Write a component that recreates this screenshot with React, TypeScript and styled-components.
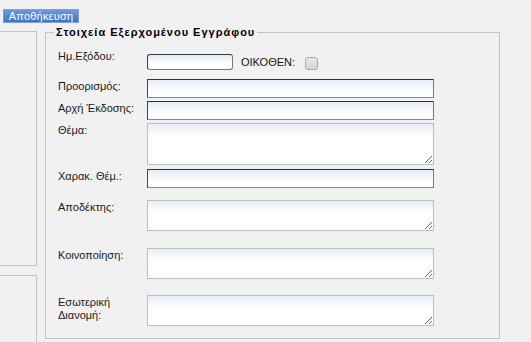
import React from 'react';
import styled, { createGlobalStyle } from 'styled-components';

const GlobalStyle = createGlobalStyle`
  html, body {
    margin: 0;
    padding: 0;
    background: #f1f1f1;
    font-family: "Liberation Sans", Arial, sans-serif;
    font-size: 11px;
    color: #1a1a1a;
    overflow: hidden;
  }
`;

type Row = { label: string; kind: 'input' | 'area'; height: number; gap: number };

const rows: Row[] = [
  { label: 'Προορισμός:', kind: 'input', height: 19, gap: 9 },
  { label: 'Αρχή Έκδοσης:', kind: 'input', height: 19, gap: 3 },
  { label: 'Θέμα:', kind: 'area', height: 42, gap: 3 },
  { label: 'Χαρακ. Θέμ.:', kind: 'input', height: 19, gap: 4 },
  { label: 'Αποδέκτης:', kind: 'area', height: 31, gap: 12 },
  { label: 'Κοινοποίηση:', kind: 'area', height: 31, gap: 17 },
  { label: 'Εσωτερική Διανομή:', kind: 'area', height: 31, gap: 16 },
];

function App() {
  return (
    <Page>
      <GlobalStyle />
      <TopBar>
        <SaveButton type="button">Αποθήκευση</SaveButton>
      </TopBar>
      <Main>
        <SideColumn>
          <SidePanel $height={235} />
          <SidePanel $height={120} $gap={9} />
        </SideColumn>
        <Fieldset>
          <Legend>Στοιχεία Εξερχομένου Εγγράφου</Legend>
          <Form>
            <FormRow $gap={0}>
              <Label $shift={-4}>Ημ.Εξόδου:</Label>
              <Inline>
                <DateInput type="text" />
                <InlineLabel>ΟΙΚΟΘΕΝ:</InlineLabel>
                <Check type="checkbox" />
              </Inline>
            </FormRow>
            {rows.map((r) => (
              <FormRow key={r.label} $gap={r.gap}>
                <Label $shift={1}>{r.label}</Label>
                {r.kind === 'input' ? <TextInput type="text" /> : <TextArea $height={r.height} />}
              </FormRow>
            ))}
          </Form>
        </Fieldset>
      </Main>
    </Page>
  );
}

const Page = styled.div`
  width: 531px;
  height: 342px;
  overflow: hidden;
`;

const TopBar = styled.div`
  display: flex;
  padding: 9px 0 0 3px;
`;

const SaveButton = styled.button`
  height: 14px;
  width: 76px;
  padding: 0 0 1px;
  border: 1px solid #7d9fd4;
  border-radius: 0;
  background: linear-gradient(#6a9ae0, #3f73c4);
  color: #fff;
  font-family: "Liberation Sans", Arial, sans-serif;
  font-size: 11px;
  letter-spacing: 0.2px;
  line-height: 12px;
  text-align: center;
`;

const Main = styled.div`
  display: flex;
  align-items: flex-start;
  margin-top: 3px;
`;

const SideColumn = styled.div`
  display: flex;
  flex-direction: column;
  width: 37px;
  padding-top: 5px;
`;

const SidePanel = styled.div<{ $height: number; $gap?: number }>`
  height: ${(p) => p.$height - 2}px;
  margin-top: ${(p) => p.$gap ?? 0}px;
  border: 1px solid #c3c3c3;
  border-left: none;
`;

const Fieldset = styled.fieldset`
  box-sizing: border-box;
  width: 455px;
  margin: 0 0 0 8px;
  padding: 0;
  border: 1px solid #c3c3c3;
`;

const Legend = styled.legend`
  margin-left: 8px;
  padding: 0 2px;
  font-size: 11px;
  line-height: 13px;
  font-weight: bold;
  letter-spacing: 1px;
  color: #000;
`;

const Form = styled.div`
  display: flex;
  flex-direction: column;
  padding: 15px 0 12px 12px;
`;

const FormRow = styled.div<{ $gap: number }>`
  display: grid;
  grid-template-columns: 89px 287px;
  align-items: start;
  margin-top: ${(p) => p.$gap}px;
`;

const Label = styled.div<{ $shift: number }>`
  margin-top: ${(p) => p.$shift}px;
  line-height: 13px;
  padding-right: 6px;
`;

const Inline = styled.div`
  display: flex;
  align-items: center;
`;

const fieldBg = `linear-gradient(#e2eaf5, #ffffff 60%)`;

const DateInput = styled.input`
  box-sizing: border-box;
  width: 86px;
  height: 16px;
  margin: 0;
  border: 1px solid;
  border-color: #3c3c3c #7a7a7a #7a7a7a #3c3c3c;
  border-radius: 3px;
  background: ${fieldBg};
  outline: none;
`;

const InlineLabel = styled.span`
  margin-left: 8px;
  margin-top: 1px;
  line-height: 13px;
  color: #111;
`;

const Check = styled.input`
  appearance: none;
  box-sizing: border-box;
  width: 13px;
  height: 13px;
  margin: 2px 0 0 10px;
  border: 1px solid #a8a8a8;
  border-radius: 3px;
  background: linear-gradient(#e6e6e6, #d8d8d8);
`;

const TextInput = styled.input`
  box-sizing: border-box;
  width: 287px;
  height: 19px;
  margin: 0;
  border: 1px solid;
  border-color: #333 #777 #888 #444;
  border-radius: 0;
  background: linear-gradient(#e6edf6, #ffffff 70%);
  outline: none;
`;

const TextArea = styled.textarea<{ $height: number }>`
  box-sizing: border-box;
  display: block;
  width: 287px;
  height: ${(p) => p.$height}px;
  margin: 0;
  border: 1px solid #bdbdbd;
  border-radius: 0;
  background: linear-gradient(#e6edf6, #ffffff 12px);
  outline: none;
`;

export default App;
